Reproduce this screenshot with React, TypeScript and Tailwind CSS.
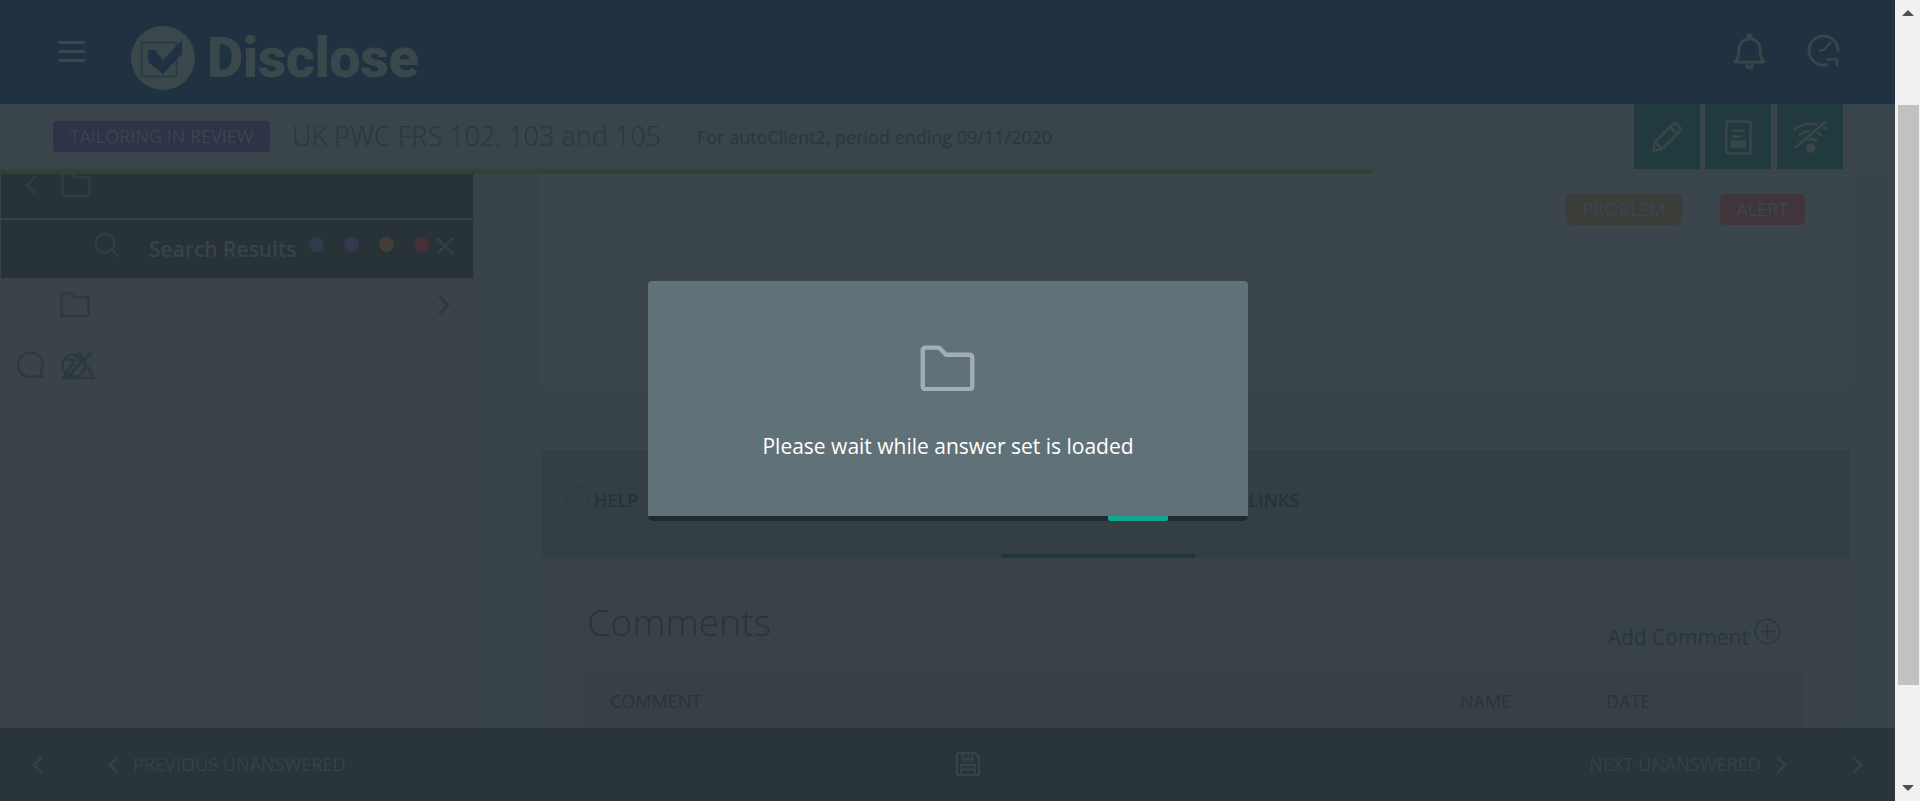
import React from "react";

const openSans = { fontFamily: '"Open Sans", "Liberation Sans", sans-serif' };

function Chevron({ dir, className }: { dir: "l" | "r"; className?: string }) {
  return (
    <svg viewBox="0 0 12 20" className={className} fill="none" stroke="currentColor" strokeWidth="2.800" strokeLinecap="round" strokeLinejoin="round">
      {dir === "l" ? <path d="M10 2 2 10l8 8" /> : <path d="m2 2 8 8-8 8" />}
    </svg>
  );
}

function Folder({ className, sw = 2 }: { className?: string; sw?: number }) {
  return (
    <svg viewBox="0 0 30 25" className={className} fill="none" stroke="currentColor" strokeWidth={sw} strokeLinejoin="round">
      <path d="M1.500 3c0-1 .6-1.600 1.600-1.600h6.600c.7 0 1.100.2 1.500.7l3 3.200h12.700c1 0 1.600.6 1.600 1.600v15.500c0 1-.6 1.600-1.600 1.600H3.100c-1 0-1.600-.6-1.600-1.600z" />
    </svg>
  );
}

function Logo() {
  return (
    <div className="flex items-center mt-[11px]">
      <svg viewBox="0 0 64 64" className="w-16 h-16">
        <circle cx="32" cy="32" r="32" fill="#3a474b" />
        <rect x="10.500" y="16.500" width="35" height="34" fill="none" stroke="#2b3b45" strokeWidth="1.600" />
        <path d="M17 24h7l8 10 19-20v14L32 48 17 36z" fill="#203241" />
      </svg>
      <span className="ml-[12px] text-[56px] leading-none font-black text-[#3a474b] tracking-[-0.5px]" style={{ fontFamily: "Roboto, sans-serif" }}>
        Disclose
      </span>
    </div>
  );
}

function Header() {
  return (
    <div className="h-[104px] bg-[#203241] flex items-center pl-[58px] pr-[55px] shrink-0">
      <div className="w-[27px] flex flex-col gap-[6px] mr-[46px] -mt-[2px]">
        <div className="h-[3px] rounded-full bg-[#3a474b]" />
        <div className="h-[3px] rounded-full bg-[#3a474b]" />
        <div className="h-[3px] rounded-full bg-[#3a474b]" />
      </div>
      <Logo />
      <div className="ml-auto flex items-center gap-[41px] -mt-[3px]">
        <svg viewBox="0 0 34 38" className="w-[33px] h-[37px]" fill="none" stroke="#3a4549" strokeWidth="3" strokeLinejoin="round" strokeLinecap="round">
          <path d="M2 31h30c-3-3-4-6-4-12 0-7-4-12-11-12S6 12 6 19c0 6-1 9-4 12z" />
          <circle cx="17" cy="4" r="1.600" fill="#3a4549" />
          <path d="M14 34a3 3 0 0 0 6 0" fill="#3a4549" />
        </svg>
        <svg viewBox="0 0 34 34" className="w-[33px] h-[33px]" fill="none" stroke="#3a4549" strokeWidth="3" strokeLinecap="round" strokeLinejoin="round">
          <path d="M32 17A15 15 0 1 0 20 31.700" />
          <path d="M21 26h10v6" strokeWidth="2.800" />
          <path d="M13 17l5-1 6-7" strokeWidth="2.400" />
        </svg>
      </div>
    </div>
  );
}

function ActionButton({ children, className = "" }: { children: React.ReactNode; className?: string }) {
  return <div className={`w-[66px] h-[66px] bg-[#203a3d] flex items-center justify-center ${className}`}>{children}</div>;
}

function SubHeader() {
  return (
    <div className="h-[65px] bg-[#39454a] flex items-center pl-[53px] pr-[52px] shrink-0" style={openSans}>
      <div className="h-[31px] w-[217px] rounded-[4px] bg-[#2f3347] flex items-center justify-center text-[18px] text-[#3a4450] whitespace-nowrap">
        TAILORING IN REVIEW
      </div>
      <div className="ml-[22px] text-[27px] font-light text-[#2b363d] whitespace-nowrap">UK PWC FRS 102, 103 and 105</div>
      <div className="ml-[36px] mt-[1px] text-[18px] text-[#2b363d] whitespace-nowrap">For autoClient2, period ending 09/11/2020</div>
      <div className="ml-auto flex h-[66px] self-start">
        <ActionButton>
          <svg viewBox="0 0 32 32" className="w-8 h-8" fill="none" stroke="#3a4549" strokeWidth="2.600" strokeLinejoin="round">
            <path d="M2 30l2-9L22 3c1-1 2.400-1 3.400 0l3.600 3.600c1 1 1 2.400 0 3.400L11 28z" />
            <path d="M4 21l7 7M19 6l7 7" />
          </svg>
        </ActionButton>
        <ActionButton className="ml-[5px]">
          <svg viewBox="0 0 28 36" className="w-[27px] h-[35px]" fill="none" stroke="#3a4549" strokeWidth="2.600">
            <rect x="1.500" y="1.500" width="25" height="33" rx="2" />
            <path d="M7 11h14M7 17h10" />
            <rect x="6" y="21" width="16" height="8" fill="#3a4549" stroke="none" />
          </svg>
        </ActionButton>
        <ActionButton className="ml-[6px]">
          <svg viewBox="0 0 36 34" className="w-[35px] h-[33px]" fill="none" stroke="#3a4549" strokeWidth="2.800">
            <path d="M1 9c10-8 24-8 34 0M6 15c7-6 17-6 24 0M11 21c4-3 10-3 14 0" />
            <path d="M3 27 33 1" stroke="#203a3d" strokeWidth="5" />
            <path d="M3 27 33 1" strokeLinecap="round" />
            <circle cx="18" cy="28" r="5" fill="#3a4549" stroke="none" />
          </svg>
        </ActionButton>
      </div>
    </div>
  );
}

function Dot({ className }: { className: string }) {
  return <div className={`w-[15px] h-[15px] rounded-full ${className}`} />;
}

function Sidebar() {
  return (
    <div className="w-[474px] shrink-0 pl-px border-r border-[#384147] bg-[#3b4249]" style={openSans}>
      <div className="h-[44px] bg-[#283338] overflow-hidden flex items-start text-[#2f3d43]">
        <Chevron dir="l" className="w-[12px] h-[20px] ml-[24px] mt-[1px]" />
        <Folder className="w-[30px] h-[25px] ml-[24px] -mt-[2px] text-[#323e44]" />
      </div>
      <div className="h-[2px] bg-[#39444a]" />
      <div className="h-[58px] bg-[#283338] flex items-start relative text-[#38434a]">
        <svg viewBox="0 0 26 26" className="w-[26px] h-[26px] ml-[93px] mt-[12px] text-[#323f45]" fill="none" stroke="currentColor" strokeWidth="2">
          <circle cx="11" cy="11" r="9.500" />
          <path d="m18 18 7 7" />
        </svg>
        <div className="ml-[29px] mt-[15px] text-[21px] font-semibold whitespace-nowrap leading-[28px]">Search Results</div>
        <div className="flex gap-[20px] ml-[12px] mt-[17px]">
          <Dot className="bg-[#2e3d4c]" />
          <Dot className="bg-[#353850]" />
          <Dot className="bg-[#463e35]" />
          <Dot className="bg-[#473036]" />
        </div>
        <svg viewBox="0 0 18 18" className="w-[18px] h-[18px] ml-[7px] mt-[17px] text-[#364147]" fill="none" stroke="currentColor" strokeWidth="2">
          <path d="m1 1 16 16M17 1 1 17" />
        </svg>
      </div>
      <div className="h-[60px] flex items-center pb-[6px] border-b border-[#384046] text-[#2b3a3f]">
        <Folder className="w-[30px] h-[25px] ml-[59px]" sw={2.4} />
        <Chevron dir="r" className="w-[12px] h-[20px] ml-auto mr-[23px]" />
      </div>
      <div className="flex items-center h-[54px] pb-[1px] text-[#2a3a3f]">
        <svg viewBox="0 0 30 30" className="w-[28px] h-[28px] ml-[15px]" fill="none" stroke="currentColor" strokeWidth="2.400" strokeLinejoin="round">
          <path d="M15 2a13 13 0 1 0 6 24.600L28 28l-1.600-5.500A13 13 0 0 0 15 2z" />
        </svg>
        <svg viewBox="0 0 36 32" className="w-[35px] h-[31px] ml-[17px]" fill="none" stroke="currentColor" strokeWidth="2.400" strokeLinejoin="round">
          <circle cx="13" cy="17" r="11.500" />
          <path d="M6 11h8l-2 5 5 2-4 5-2 4M16 7l4 4-3 4" strokeWidth="2" />
          <path d="M2 30h32L19 3z" strokeWidth="2.600" />
          <path d="M6 29 31 4" strokeWidth="2.800" />
        </svg>
      </div>
    </div>
  );
}

function TopCard() {
  return (
    <div className="h-[214px] ml-[67px] mr-[45px] bg-[#3a464b] border-b border-[#384247] flex flex-col" style={openSans}>
      <div className="flex justify-end pt-[20px] pr-[45px]">
        <div className="h-[31px] w-[116px] rounded-[5px] bg-[#3b3d39] flex items-center justify-center text-[18px] text-[#3a4650]">PROBLEM</div>
        <div className="h-[31px] w-[85px] ml-[38px] rounded-[5px] bg-[#3f353a] flex items-center justify-center text-[18px] text-[#3a4650]">ALERT</div>
      </div>
      <div className="ml-[45px] mt-[65px] h-[27px] w-[200px] rounded-[4px] border border-[#364248]" />
    </div>
  );
}

function Tabs() {
  return (
    <div className="relative h-[108px] mt-[62px] ml-[67px] mr-[45px] bg-[#343f44] text-[#27323a]" style={openSans}>
      <div className="flex items-center pt-[38px] pl-[24px] text-[18px] font-semibold leading-[24px]">
        <svg viewBox="0 0 24 24" className="w-[24px] h-[24px] shrink-0 -mt-[6px] text-[#2f3c42]" fill="none" stroke="currentColor" strokeWidth="1.600">
          <circle cx="12" cy="12" r="11" />
          <path d="M12 10.500l-.8 6.500M12.500 6.500v1" />
        </svg>
        <span className="ml-[5px]">HELP</span>
        <span className="ml-[610px]">LINKS</span>
      </div>
      <div className="absolute left-[460px] bottom-0 w-[194px] h-[4px] bg-[#1f383b]" />
    </div>
  );
}

function Comments() {
  return (
    <div className="flex-1 ml-[67px] mr-[45px] bg-[#3a4249] overflow-hidden" style={openSans}>
      <div className="flex h-[113px] pl-[46px] pr-[69px]">
        <div className="mt-[36px] text-[37.500px] font-light leading-[56px] text-[#28343a]">Comments</div>
        <div className="ml-auto mt-[60px] flex items-start text-[#24383d]">
          <span className="text-[21px] leading-[38px]">Add Comment</span>
          <svg viewBox="0 0 28 28" className="w-[27px] h-[27px] ml-[5px]" fill="none" stroke="currentColor" strokeWidth="1.500">
            <circle cx="14" cy="14" r="12.500" />
            <path d="M14 6v16M6 14h16" />
          </svg>
        </div>
      </div>
      <div className="ml-[44px] mr-[47px] h-[57px] bg-[#384046] flex text-[18px] text-[#28343a]">
        <div className="w-[855px] pl-[25px] pt-[17px] border-r border-[#363e44]">COMMENT</div>
        <div className="w-[138px] pl-[20px] pt-[17px] border-r border-[#363e44]">NAME</div>
        <div className="flex-1 pl-[28px] pt-[17px]">DATE</div>
      </div>
    </div>
  );
}

function Footer() {
  return (
    <div className="h-[73px] bg-[#2a353a] shrink-0 flex items-center text-[#36414a] relative" style={openSans}>
      <div className="w-[76px] h-full border-r border-[#28323a] flex items-center pl-[32px]">
        <Chevron dir="l" className="w-[11px] h-[18px]" />
      </div>
      <Chevron dir="l" className="w-[11px] h-[18px] ml-[32px]" />
      <span className="ml-[14px] text-[18.100px] whitespace-nowrap">PREVIOUS UNANSWERED</span>
      <svg viewBox="0 0 26 26" className="w-[26px] h-[26px] ml-[609px] -mt-[2px] text-[#38444a]" fill="none" stroke="currentColor" strokeWidth="2.200" strokeLinejoin="round">
        <path d="M2 3.500C2 2.500 2.600 2 3.500 2H20l4 4v16.500c0 1-.6 1.500-1.500 1.500h-19C2.600 24 2 23.500 2 22.500z" />
        <path d="M7.500 2v6.500h10V2M13.500 4v2.500M6 24v-10h14v10M6 18.500h14" strokeWidth="1.800" />
      </svg>
      <span className="ml-auto text-[18.100px] whitespace-nowrap">NEXT UNANSWERED</span>
      <Chevron dir="r" className="w-[11px] h-[18px] ml-[15px]" />
      <Chevron dir="r" className="w-[11px] h-[18px] ml-[65px] mr-[32px]" />
    </div>
  );
}

function Scrollbar() {
  return (
    <div className="w-[25px] shrink-0 bg-[#f1f1f1] flex flex-col items-center">
      <svg viewBox="0 0 12 6" className="w-[12px] h-[6px] mt-[10px] text-[#505050]" fill="currentColor">
        <path d="M6 0l6 6H0z" />
      </svg>
      <div className="ml-[1px] mt-[89px] w-[21px] h-[580px] bg-[#c1c1c1]" />
      <svg viewBox="0 0 12 6" className="w-[12px] h-[6px] mt-[100px] text-[#505050]" fill="currentColor">
        <path d="M6 6l6-6H0z" />
      </svg>
    </div>
  );
}

function LoadingModal() {
  return (
    <div className="absolute left-[648px] top-[281px] w-[600px] h-[240px] rounded-[4px] overflow-hidden bg-[#617178] flex flex-col items-center" style={openSans}>
      <Folder className="w-[55px] h-[46px] -ml-[2px] mt-[64px] text-[#a3adb5]" sw={2.4} />
      <div className="mt-[41px] text-[21px] leading-[28px] text-white whitespace-nowrap">Please wait while answer set is loaded</div>
      <div className="mt-auto w-full h-[5px] bg-[#202c32] relative">
        <div className="absolute left-[460px] top-0 w-[60px] h-full rounded-b-[2px] bg-[#0fa88e]" />
      </div>
    </div>
  );
}

export default function App() {
  return (
    <div className="relative flex w-[1920px] h-[801px] overflow-hidden bg-white">
      <div className="flex flex-col w-[1895px]">
        <Header />
        <SubHeader />
        <div className="flex h-[5px] shrink-0 bg-[#3a454a]">
          <div className="w-[1372px] bg-[#2e4334]" />
        </div>
        <div className="flex flex-1 min-h-0 bg-[#39434a]">
          <Sidebar />
          <div className="flex-1 flex flex-col min-w-0 relative">
            <TopCard />
            <Tabs />
            <Comments />
          </div>
        </div>
        <Footer />
      </div>
      <Scrollbar />
      <LoadingModal />
    </div>
  );
}
